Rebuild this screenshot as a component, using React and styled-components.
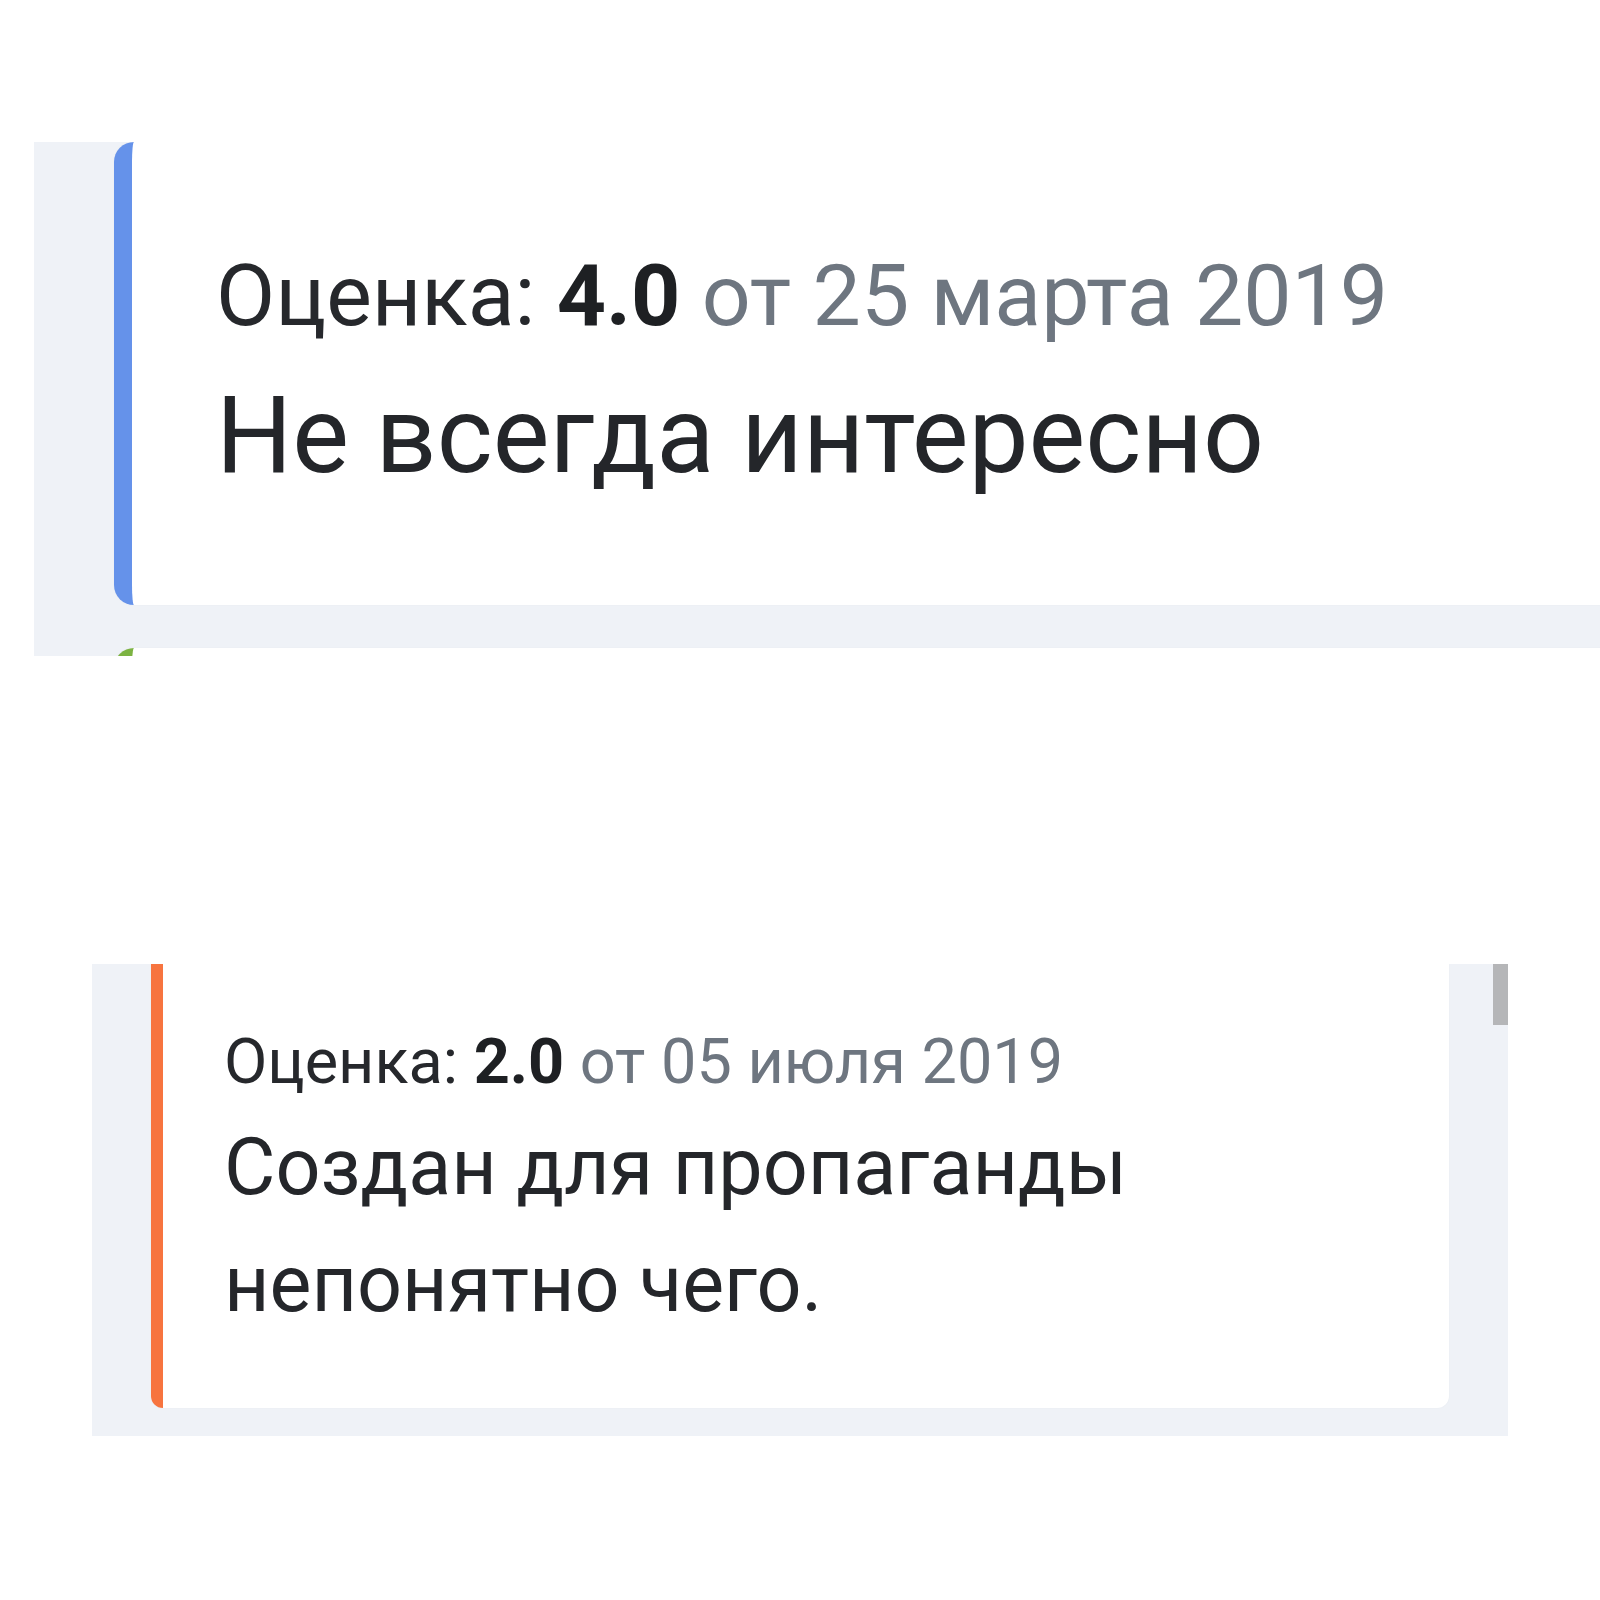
import React from "react";
import styled, { createGlobalStyle } from "styled-components";

const GlobalStyle = createGlobalStyle`
  html, body {
    margin: 0;
    padding: 0;
    background: #ffffff;
    overflow: hidden;
  }
  body {
    font-family: Roboto, "Noto Sans", "Liberation Sans", sans-serif;
    color: #26282c;
  }
`;

const Page = styled.div`
  display: flex;
  flex-direction: column;
  padding-top: 142px;
  width: 1600px;
  height: 1458px;
`;

// grey scroll area that holds the review cards
const ReviewList = styled.div`
  position: relative;
  display: flex;
  flex-direction: column;
  justify-content: ${p => (p.$alignEnd ? "flex-end" : "flex-start")};
  gap: ${p => p.$gap}px;
  box-sizing: border-box;
  margin-top: ${p => p.$top}px;
  margin-left: ${p => p.$left}px;
  width: ${p => p.$width}px;
  height: ${p => p.$height}px;
  padding: ${p => p.$pad};
  background: #eff2f7;
  overflow: hidden;
  flex-shrink: 0;
`;

const Card = styled.div`
  flex-shrink: 0;
  box-sizing: border-box;
  min-height: ${p => p.$minHeight || 0}px;
  background: #ffffff;
  border-left: ${p => p.$bar}px solid ${p => p.$accent};
  border-radius: ${p => p.$radius};
  padding: ${p => p.$pad || 0};
  box-shadow: 0 0 2px rgba(40, 50, 70, 0.04);
`;

const Meta = styled.div`
  font-size: ${p => p.$size}px;
  line-height: ${p => p.$line}px;
  color: #26282c;
  white-space: nowrap;
`;

const Score = styled.b`
  font-weight: 700;
  color: #1e2023;
`;

const DateText = styled.span`
  color: #6e7680;
`;

const Text = styled.p`
  margin: ${p => p.$gapTop}px 0 0;
  font-size: ${p => p.$size}px;
  line-height: ${p => p.$line}px;
  color: #24262a;
`;

const ScrollThumb = styled.div`
  position: absolute;
  top: 0;
  right: 0;
  width: 15px;
  height: 61px;
  background: #b5b6b8;
`;

function Review({ score, date, text, accent, big }) {
  if (big) {
    return (
      <Card $bar={18} $accent={accent} $radius="20px 0 0 20px" $pad="94px 0 89px 84px">
        <Meta $size={86} $line={120}>
          Оценка: <Score>{score}</Score> <DateText>от {date}</DateText>
        </Meta>
        <Text $size={107} $line={160} $gapTop={0}>{text}</Text>
      </Card>
    );
  }
  return (
    <Card $bar={12} $accent={accent} $radius="0 0 12px 12px" $pad="53px 64px 65px 61px">
      <Meta $size={63} $line={89}>
        Оценка: <Score>{score}</Score> <DateText>от {date}</DateText>
      </Meta>
      <Text $size={79} $line={117} $gapTop={3}>{text}</Text>
    </Card>
  );
}

export default function App() {
  return (
    <>
      <GlobalStyle />
      <Page>
        <ReviewList $top={0} $left={34} $width={1640} $height={514} $gap={43} $pad="0 0 0 80px">
          <Review big score="4.0" date="25 марта 2019" text="Не всегда интересно" accent="#6592ea" />
          {/* next card, only its top edge is scrolled into view */}
          <Card $bar={18} $accent="#7cb342" $radius="20px 0 0 20px" $minHeight={120} />
        </ReviewList>

        <ReviewList $alignEnd $top={308} $left={92} $width={1416} $height={472} $gap={0} $pad="0 59px 28px 59px">
          <Review
            score="2.0"
            date="05 июля 2019"
            text="Создан для пропаганды непонятно чего."
            accent="#f7743f"
          />
          <ScrollThumb />
        </ReviewList>
      </Page>
    </>
  );
}
